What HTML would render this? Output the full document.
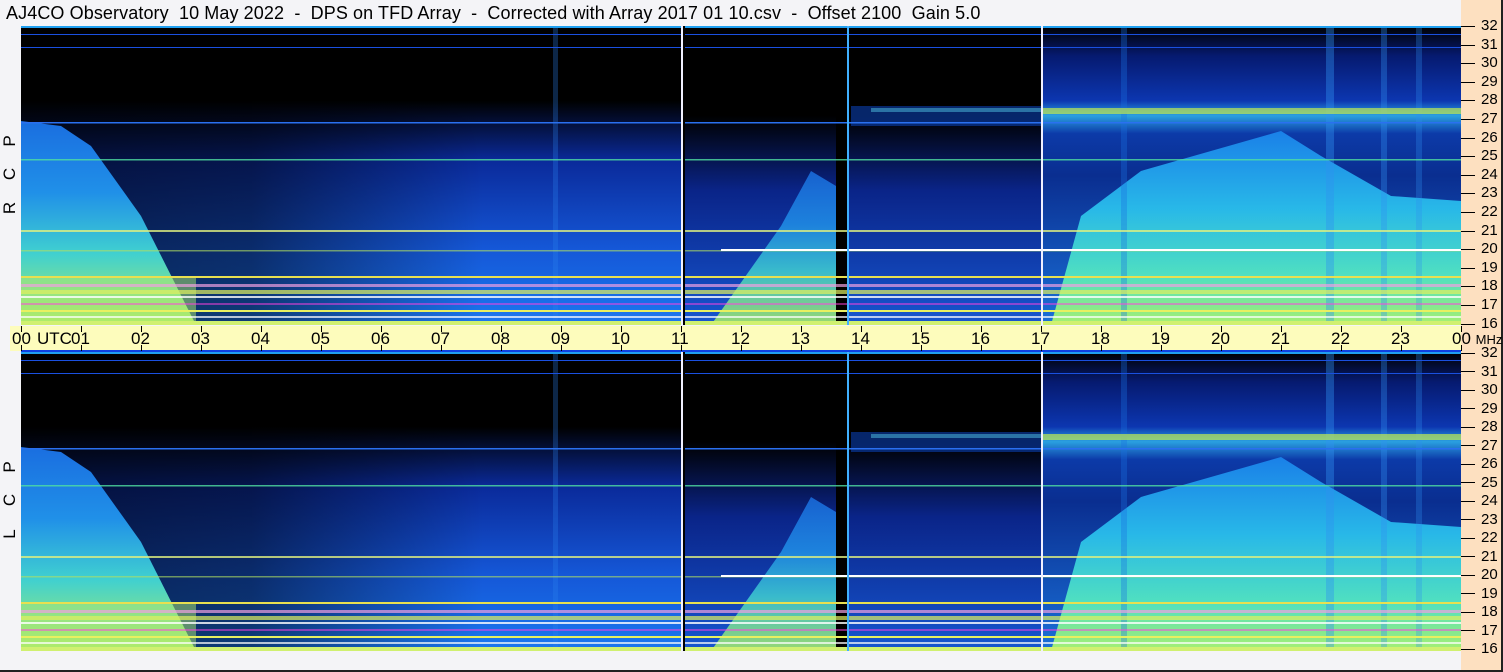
<!DOCTYPE html>
<html><head><meta charset="utf-8"><style>
html,body{margin:0;padding:0}
body{width:1503px;height:672px;background:#f4f4f7;position:relative;overflow:hidden;font-family:"Liberation Sans",sans-serif}
.t{position:absolute;color:#000;white-space:pre}
.r{position:absolute;font-size:17px;transform:rotate(-90deg);width:16px;text-align:center;left:2px}
</style></head><body>
<svg width="1503" height="672" style="position:absolute;left:0;top:0" xmlns="http://www.w3.org/2000/svg">
<defs>
<linearGradient id="haze" x1="0" y1="0" x2="0" y2="1">
<stop offset="0" stop-color="#000"/><stop offset="0.25" stop-color="#000"/><stop offset="0.45" stop-color="#0a2a9a"/><stop offset="0.75" stop-color="#1558d8"/><stop offset="1" stop-color="#1a78f0"/></linearGradient>
<linearGradient id="hazeH" x1="0" y1="0" x2="1" y2="0">
<stop offset="0" stop-color="#000" stop-opacity="0.6"/><stop offset="0.35" stop-color="#000" stop-opacity="0.5"/><stop offset="0.7" stop-color="#000" stop-opacity="0"/><stop offset="1" stop-color="#000" stop-opacity="0"/></linearGradient>
<linearGradient id="cyanG" x1="0" y1="0" x2="0" y2="1">
<stop offset="0" stop-color="#1a6ee0"/><stop offset="0.35" stop-color="#2090e8"/><stop offset="0.65" stop-color="#40d0d0"/><stop offset="1" stop-color="#b0f060"/></linearGradient>
<linearGradient id="hill" x1="0" y1="0" x2="0" y2="1">
<stop offset="0" stop-color="#1a80e8"/><stop offset="0.4" stop-color="#28b8e8"/><stop offset="0.75" stop-color="#50e0c0"/><stop offset="1" stop-color="#a8f070"/></linearGradient>
<linearGradient id="right" x1="0" y1="0" x2="0" y2="1">
<stop offset="0" stop-color="#000"/><stop offset="0.1" stop-color="#061a70"/><stop offset="0.25" stop-color="#0c36b0"/><stop offset="0.3" stop-color="#2aa0e0"/><stop offset="0.36" stop-color="#0c3aa8"/><stop offset="0.5" stop-color="#0a2e90"/><stop offset="1" stop-color="#1a70d8"/></linearGradient>
<linearGradient id="mid" x1="0" y1="0" x2="0" y2="1">
<stop offset="0" stop-color="#000"/><stop offset="0.3" stop-color="#000"/><stop offset="0.55" stop-color="#0a2488"/><stop offset="1" stop-color="#1656d0"/></linearGradient>
<g id="panel">
<rect x="0" y="0" width="1440" height="299" fill="#000"/>
<rect x="0" y="0" width="660" height="299" fill="url(#haze)"/>
<rect x="0" y="0" width="660" height="299" fill="url(#hazeH)"/>
<polygon points="0,95 40,100 70,120 120,190 175,299 0,299" fill="url(#cyanG)"/>
<rect x="0" y="250" width="175" height="49" fill="#b0e870" opacity="0.5"/>
<rect x="660" y="0" width="160" height="299" fill="url(#mid)"/>
<polygon points="690,299 760,200 790,145 815,160 815,299" fill="url(#cyanG)" opacity="0.85"/>
<rect x="825" y="0" width="195" height="299" fill="url(#mid)"/>
<rect x="830" y="80" width="190" height="20" fill="#0a40b0" opacity="0.6"/>
<rect x="1020" y="0" width="420" height="299" fill="url(#right)"/>
<polygon points="1030,299 1060,190 1120,145 1260,105 1300,130 1370,170 1440,175 1440,299" fill="url(#hill)"/>
<rect x="1100" y="0" width="6" height="299" fill="#1a70e0" opacity="0.35"/>
<rect x="1305" y="0" width="8" height="299" fill="#3090f0" opacity="0.4"/>
<rect x="1360" y="0" width="6" height="299" fill="#3090f0" opacity="0.35"/>
<rect x="1395" y="0" width="6" height="299" fill="#3090f0" opacity="0.3"/>
<rect x="815" y="60" width="12" height="239" fill="#000"/>
<rect x="532" y="0" width="5" height="299" fill="#2a80f0" opacity="0.3"/>
<rect x="0" y="0" width="1440" height="2" fill="#20a0f0"/>
<rect x="0" y="8" width="1440" height="1" fill="#1a50e0"/>
<rect x="0" y="21" width="1440" height="1" fill="#1a50e0"/>
<rect x="0" y="96" width="1440" height="1.5" fill="#2a70f0"/>
<rect x="1020" y="82" width="420" height="6" fill="#c0e850" opacity="0.7"/>
<rect x="850" y="82" width="170" height="4" fill="#50c0e0" opacity="0.5"/>
<rect x="0" y="133" width="1440" height="1.5" fill="#50e0a0" opacity="0.8"/>
<rect x="0" y="204" width="1440" height="2" fill="#e0f080" opacity="0.8"/>
<rect x="0" y="224" width="1440" height="1.5" fill="#b0e060" opacity="0.6"/>
<rect x="700" y="223" width="740" height="2" fill="#ffffff"/>
<rect x="0" y="250" width="1440" height="2" fill="#e8e050"/>
<rect x="0" y="258" width="1440" height="3" fill="#f0a0e0" opacity="0.7"/>
<rect x="0" y="264" width="1440" height="4" fill="#e0f060" opacity="0.7"/>
<rect x="0" y="270" width="1440" height="2" fill="#ffffff" opacity="0.8"/>
<rect x="0" y="277" width="1440" height="2" fill="#ff40e0" opacity="0.5"/>
<rect x="0" y="284" width="1440" height="2" fill="#e8f060"/>
<rect x="0" y="290" width="1440" height="2" fill="#ffffff" opacity="0.7"/>
<rect x="0" y="295" width="1440" height="4" fill="#d0f070"/>
<rect x="660" y="0" width="2" height="299" fill="#f0f0ff"/>
<rect x="662" y="0" width="2" height="299" fill="#000"/>
<rect x="826" y="0" width="2" height="299" fill="#40b0ff"/>
<rect x="1020" y="0" width="2" height="299" fill="#f0f0ff"/>
</g>
</defs>
<rect x="1461" y="0" width="40" height="671" fill="#fde0c0"/>
<rect x="1501" y="0" width="2" height="672" fill="#202020"/>
<rect x="0" y="670" width="1503" height="2" fill="#202020"/>
<use href="#panel" x="21" y="26"/>
<use href="#panel" x="21" y="352"/>
<rect x="10" y="326" width="1451" height="25" fill="#fdfcbc"/>
<rect x="21" y="350" width="1440" height="2" fill="#1040e0"/>
<g stroke="#000" stroke-width="1">
<path d="M21.5 326v6M81.5 326v6M141.5 326v6M201.5 326v6M261.5 326v6M321.5 326v6M381.5 326v6M441.5 326v6M501.5 326v6M561.5 326v6M621.5 326v6M681.5 326v6M741.5 326v6M801.5 326v6M861.5 326v6M921.5 326v6M981.5 326v6M1041.5 326v6M1101.5 326v6M1161.5 326v6M1221.5 326v6M1281.5 326v6M1341.5 326v6M1401.5 326v6M1461.5 326v6"/>
<path d="M21.5 345v6M81.5 345v6M141.5 345v6M201.5 345v6M261.5 345v6M321.5 345v6M381.5 345v6M441.5 345v6M501.5 345v6M561.5 345v6M621.5 345v6M681.5 345v6M741.5 345v6M801.5 345v6M861.5 345v6M921.5 345v6M981.5 345v6M1041.5 345v6M1101.5 345v6M1161.5 345v6M1221.5 345v6M1281.5 345v6M1341.5 345v6M1401.5 345v6M1461.5 345v6"/>
<path d="M1461 26.5h14M1461 45.5h14M1461 63.5h14M1461 82.5h14M1461 100.5h14M1461 119.5h14M1461 138.5h14M1461 156.5h14M1461 175.5h14M1461 193.5h14M1461 212.5h14M1461 231.5h14M1461 249.5h14M1461 268.5h14M1461 286.5h14M1461 305.5h14M1461 324.5h14"/>
<path d="M1461 353.5h14M1461 371.5h14M1461 390.5h14M1461 408.5h14M1461 427.5h14M1461 445.5h14M1461 464.5h14M1461 482.5h14M1461 501.5h14M1461 519.5h14M1461 538.5h14M1461 556.5h14M1461 575.5h14M1461 593.5h14M1461 612.5h14M1461 630.5h14M1461 649.5h14"/>
</g>
</svg>
<div class="t" style="left:6px;top:3px;font-size:18px;letter-spacing:0.1px">AJ4CO Observatory  10 May 2022  -  DPS on TFD Array  -  Corrected with Array 2017 01 10.csv  -  Offset 2100  Gain 5.0</div>
<div class="r" style="top:131px">P</div>
<div class="r" style="top:164px">C</div>
<div class="r" style="top:198px">R</div>
<div class="r" style="top:457px">P</div>
<div class="r" style="top:490px">C</div>
<div class="r" style="top:524px">L</div>
<div style="position:absolute;left:0;top:329px;font-size:17px;font-family:'Liberation Sans',sans-serif">
<span class="t" style="left:12px">00</span><span class="t" style="left:37px">UTC</span>
<span class="t" style="left:71px">01</span><span class="t" style="left:131px">02</span><span class="t" style="left:191px">03</span><span class="t" style="left:251px">04</span><span class="t" style="left:311px">05</span><span class="t" style="left:371px">06</span><span class="t" style="left:431px">07</span><span class="t" style="left:491px">08</span><span class="t" style="left:551px">09</span><span class="t" style="left:611px">10</span><span class="t" style="left:671px">11</span><span class="t" style="left:731px">12</span><span class="t" style="left:791px">13</span><span class="t" style="left:851px">14</span><span class="t" style="left:911px">15</span><span class="t" style="left:971px">16</span><span class="t" style="left:1031px">17</span><span class="t" style="left:1091px">18</span><span class="t" style="left:1151px">19</span><span class="t" style="left:1211px">20</span><span class="t" style="left:1271px">21</span><span class="t" style="left:1331px">22</span><span class="t" style="left:1391px">23</span><span class="t" style="left:1452px">00 <span style="font-size:13px">MHz</span></span>
</div>
<div style="position:absolute;left:1481px;top:17px;font-size:15px;line-height:18.6px;font-family:'Liberation Sans',sans-serif">32<br>31<br>30<br>29<br>28<br>27<br>26<br>25<br>24<br>23<br>22<br>21<br>20<br>19<br>18<br>17</div>
<div style="position:absolute;left:1481px;top:315px;font-size:15px;font-family:'Liberation Sans',sans-serif">16</div>
<div style="position:absolute;left:1481px;top:344px;font-size:15px;line-height:18.5px;font-family:'Liberation Sans',sans-serif">32<br>31<br>30<br>29<br>28<br>27<br>26<br>25<br>24<br>23<br>22<br>21<br>20<br>19<br>18<br>17<br>16</div>
</body></html>
